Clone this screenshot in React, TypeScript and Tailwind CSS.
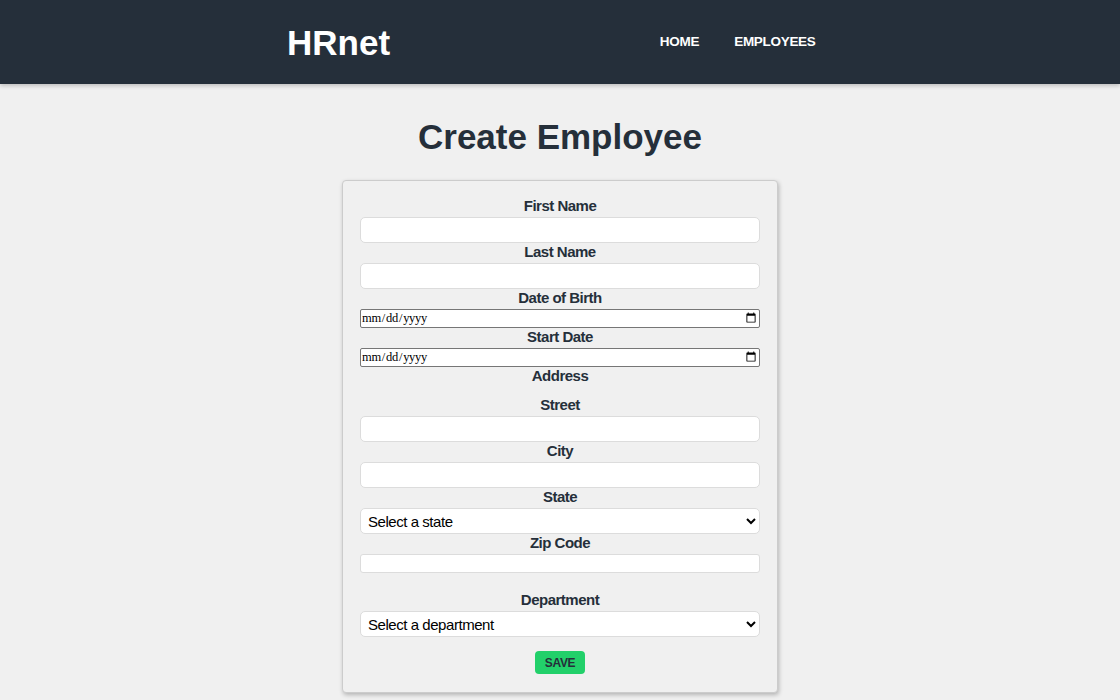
import React from "react";

const sans = { fontFamily: '"Liberation Sans", Arial, sans-serif' };

function Label({ children, htmlFor }: { children: React.ReactNode; htmlFor?: string }) {
  return (
    <label
      htmlFor={htmlFor}
      className="block text-center text-[15px] font-bold leading-[18px] pb-[2px] tracking-[-0.5px] text-[#252f3a]"
    >
      {children}
    </label>
  );
}

function TextInput({ id }: { id: string }) {
  return (
    <input
      id={id}
      type="text"
      className="block w-full h-[26px] rounded-[5px] border border-[#dcdcdc] bg-white px-2 text-[14px] outline-none"
    />
  );
}

function DateInput({ id }: { id: string }) {
  return (
    <input
      id={id}
      type="date"
      className="block w-full h-[19px] rounded-[2px] border border-[#767676] bg-white text-[12.5px] tracking-[-0.3px] text-black leading-none"
      style={{ fontFamily: '"Liberation Serif", "Times New Roman", serif' }}
    />
  );
}

function Select({ id, placeholder }: { id: string; placeholder: string }) {
  return (
    <select
      id={id}
      defaultValue=""
      className="block w-full h-[26px] rounded-[5px] border border-[#dcdcdc] bg-white pl-[3px] text-[15px] tracking-[-0.45px] text-black"
      style={sans}
    >
      <option value="">{placeholder}</option>
    </select>
  );
}

export default function App() {
  return (
    <div className="min-h-[700px] bg-[#f0f0f0]" style={sans}>
      <header className="h-[84px] bg-[#252f3a] shadow-[0_2px_4px_rgba(0,0,0,0.2)]">
        <div className="mx-auto flex h-full w-[546px] items-center justify-between">
          <div className="text-[35px] font-bold leading-none text-white">HRnet</div>
          <nav className="flex">
            <a className="px-[17.5px] text-[13.5px] font-bold tracking-[-0.3px] text-white">HOME</a>
            <a className="px-[17.5px] text-[13.5px] font-bold tracking-[-0.3px] text-white">EMPLOYEES</a>
          </nav>
        </div>
      </header>
      <main className="flex flex-col items-center">
        <h1 className="mt-[33px] text-[35px] font-bold leading-[40px] text-[#252f3a]">Create Employee</h1>
        <form className="mt-[23px] mb-[8px] w-[436px] rounded-[4px] border border-[#cccccc] bg-[#f0f0f0] px-[17px] pt-[16px] pb-[18px] shadow-[1px_2px_4px_rgba(0,0,0,0.25)]">
          <Label htmlFor="first">First Name</Label>
          <TextInput id="first" />
          <Label htmlFor="last">Last Name</Label>
          <TextInput id="last" />
          <Label htmlFor="dob">Date of Birth</Label>
          <DateInput id="dob" />
          <Label htmlFor="start">Start Date</Label>
          <DateInput id="start" />
          <div>
            <Label>Address</Label>
            <div className="mt-[9px]">
              <Label htmlFor="street">Street</Label>
              <TextInput id="street" />
              <Label htmlFor="city">City</Label>
              <TextInput id="city" />
              <Label htmlFor="state">State</Label>
              <Select id="state" placeholder="Select a state" />
              <Label htmlFor="zip">Zip Code</Label>
              <input
                id="zip"
                type="number"
                className="block h-[19px] w-full rounded-[3px] border border-[#dcdcdc] bg-white"
              />
            </div>
          </div>
          <div className="mt-[18px]">
            <Label htmlFor="dept">Department</Label>
            <Select id="dept" placeholder="Select a department" />
          </div>
          <div className="mt-[14px] flex justify-center">
            <button
              type="button"
              className="h-[23px] w-[50px] rounded-[4px] bg-[#22d06a] text-[12px] font-bold tracking-[-0.3px] text-[#252f3a]"
            >
              SAVE
            </button>
          </div>
        </form>
      </main>
    </div>
  );
}
